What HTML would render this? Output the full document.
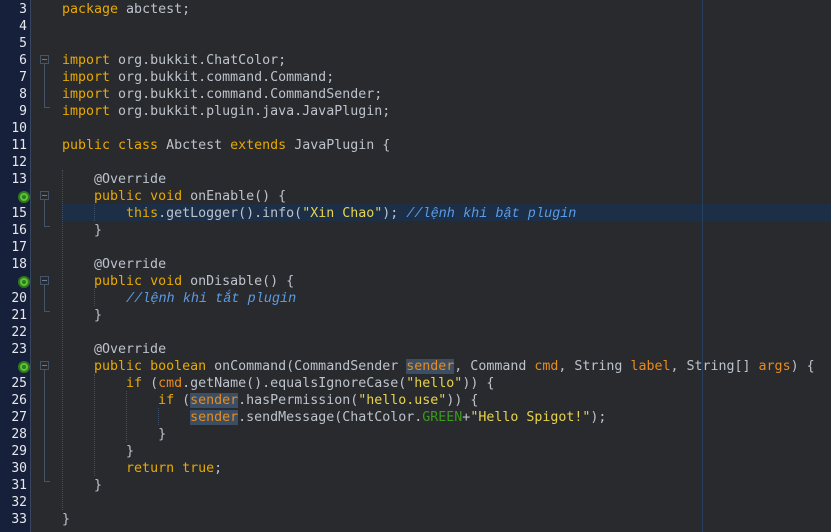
<!DOCTYPE html>
<html><head><style>
body{margin:0;width:831px;height:532px;overflow:hidden;background:#292a2e;font-family:"DejaVu Sans Mono","Liberation Mono",monospace;font-size:13.3px;}
#g{position:absolute;left:0;top:0;width:30px;height:532px;background:#17203a;border-right:1px solid #3a4660;}
.n{position:absolute;left:0;width:27px;text-align:right;color:#e6e9ee;height:17px;line-height:17px;font-size:13px;}
.l{position:absolute;left:62px;height:17px;line-height:17px;white-space:pre;color:#bcc3cc;}
.k{color:#e8a900}.s{color:#e8d44a}.c{color:#5b9ce6;font-style:italic;font-family:"Liberation Mono",monospace;font-size:13.5px}.p{color:#e88c1e}.gr{color:#3a9a1c}
.h{background:#3b4e63}
.cur{position:absolute;left:62px;right:0;top:204px;height:17px;background:#1c2f47;}
.vl{position:absolute;left:702px;top:0;width:1px;height:532px;background:#26405e;}
.gd{position:absolute;width:0;border-left:1px dotted #3d4f66;}
.fold{position:absolute;left:40px;width:9px;height:9px;border:1px solid #46546a;box-sizing:border-box;}
.fold:after{content:"";position:absolute;left:1px;top:3px;width:5px;height:1px;background:#6b7a90;}
.fl{position:absolute;left:44px;width:5px;border-left:1px solid #46546a;border-bottom:1px solid #46546a;}
.ic{position:absolute;left:18px;width:12px;height:12px;border-radius:50%;background:#5ec13a;box-sizing:border-box;border:2px solid #2f7a1c;}
.ic:after{content:"";position:absolute;left:2px;top:2px;width:4px;height:4px;border-radius:50%;background:#2f7a1c;}
</style></head><body>
<div class="cur"></div>
<div class="vl"></div>
<div id="g"></div>
<div class="gd" style="left:62px;top:170px;height:340px"></div>
<div class="gd" style="left:94px;top:204px;height:17px"></div>
<div class="gd" style="left:94px;top:289px;height:17px"></div>
<div class="gd" style="left:94px;top:374px;height:102px"></div>
<div class="gd" style="left:126px;top:391px;height:51px"></div>
<div class="gd" style="left:158px;top:408px;height:17px"></div>
<div class="fold" style="top:55px"></div><div class="fl" style="top:64px;height:43px"></div>
<div class="fold" style="top:191px"></div><div class="fl" style="top:200px;height:26px"></div>
<div class="fold" style="top:276px"></div><div class="fl" style="top:285px;height:26px"></div>
<div class="fold" style="top:361px"></div><div class="fl" style="top:370px;height:111px"></div>
<div class="ic" style="top:191px"></div>
<div class="ic" style="top:276px"></div>
<div class="ic" style="top:361px"></div>

<div class="n" style="top:1px">3</div>
<div class="n" style="top:18px">4</div>
<div class="n" style="top:35px">5</div>
<div class="n" style="top:52px">6</div>
<div class="n" style="top:69px">7</div>
<div class="n" style="top:86px">8</div>
<div class="n" style="top:103px">9</div>
<div class="n" style="top:120px">10</div>
<div class="n" style="top:137px">11</div>
<div class="n" style="top:154px">12</div>
<div class="n" style="top:171px">13</div>
<div class="n" style="top:205px">15</div>
<div class="n" style="top:222px">16</div>
<div class="n" style="top:239px">17</div>
<div class="n" style="top:256px">18</div>
<div class="n" style="top:290px">20</div>
<div class="n" style="top:307px">21</div>
<div class="n" style="top:324px">22</div>
<div class="n" style="top:341px">23</div>
<div class="n" style="top:375px">25</div>
<div class="n" style="top:392px">26</div>
<div class="n" style="top:409px">27</div>
<div class="n" style="top:426px">28</div>
<div class="n" style="top:443px">29</div>
<div class="n" style="top:460px">30</div>
<div class="n" style="top:477px">31</div>
<div class="n" style="top:494px">32</div>
<div class="n" style="top:511px">33</div>

<div class="l" style="top:1px"><span class="k">package</span> abctest;</div>
<div class="l" style="top:52px"><span class="k">import</span> org.bukkit.ChatColor;</div>
<div class="l" style="top:69px"><span class="k">import</span> org.bukkit.command.Command;</div>
<div class="l" style="top:86px"><span class="k">import</span> org.bukkit.command.CommandSender;</div>
<div class="l" style="top:103px"><span class="k">import</span> org.bukkit.plugin.java.JavaPlugin;</div>
<div class="l" style="top:137px"><span class="k">public class</span> Abctest <span class="k">extends</span> JavaPlugin {</div>
<div class="l" style="top:171px">    @Override</div>
<div class="l" style="top:188px">    <span class="k">public void</span> onEnable() {</div>
<div class="l" style="top:205px">        <span class="k">this</span>.getLogger().info(<span class="s">"Xin Chao"</span>); <span class="c">//lệnh khi bật plugin</span></div>
<div class="l" style="top:222px">    }</div>
<div class="l" style="top:256px">    @Override</div>
<div class="l" style="top:273px">    <span class="k">public void</span> onDisable() {</div>
<div class="l" style="top:290px">        <span class="c">//lệnh khi tắt plugin</span></div>
<div class="l" style="top:307px">    }</div>
<div class="l" style="top:341px">    @Override</div>
<div class="l" style="top:358px">    <span class="k">public boolean</span> onCommand(CommandSender <span class="p h">sender</span>, Command <span class="p">cmd</span>, String <span class="p">label</span>, String[] <span class="p">args</span>) {</div>
<div class="l" style="top:375px">        <span class="k">if</span> (<span class="p">cmd</span>.getName().equalsIgnoreCase(<span class="s">"hello"</span>)) {</div>
<div class="l" style="top:392px">            <span class="k">if</span> (<span class="p h">sender</span>.hasPermission(<span class="s">"hello.use"</span>)) {</div>
<div class="l" style="top:409px">                <span class="p h">sender</span>.sendMessage(ChatColor.<span class="gr">GREEN</span>+<span class="s">"Hello Spigot!"</span>);</div>
<div class="l" style="top:426px">            }</div>
<div class="l" style="top:443px">        }</div>
<div class="l" style="top:460px">        <span class="k">return true</span>;</div>
<div class="l" style="top:477px">    }</div>
<div class="l" style="top:511px">}</div>
</body></html>
